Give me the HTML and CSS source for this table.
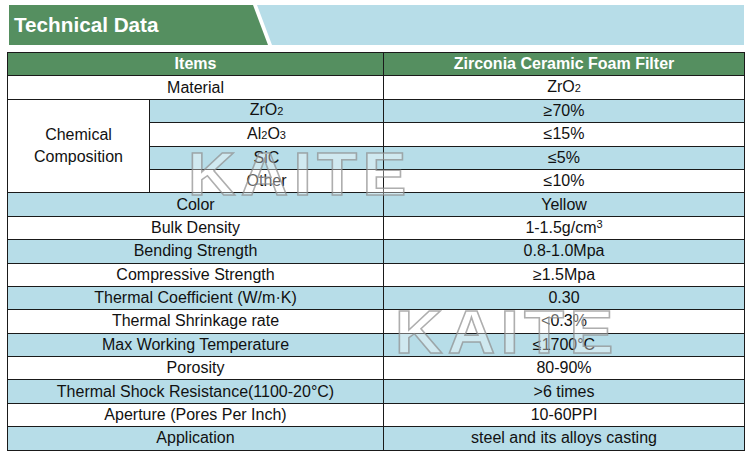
FILE: index.html
```html
<!DOCTYPE html>
<html>
<head>
<meta charset="utf-8">
<link rel="stylesheet" href="styles.css">
</head>
<body>
<div class="page">
  <div class="banner">
    <div class="banner-sep"></div>
    <div class="banner-title"><h1>Technical Data</h1></div>
  </div>
  <table class="spec">
    <colgroup>
      <col class="c1"><col class="c2"><col class="c3">
    </colgroup>
    <tr class="head"><th colspan="2">Items</th><th>Zirconia Ceramic Foam Filter</th></tr>
    <tr><td colspan="2">Material</td><td>ZrO<span class="sub">2</span></td></tr>
    <tr><td rowspan="4" class="white">Chemical<br>Composition</td><td class="blue">ZrO<span class="sub">2</span></td><td class="blue">≥70%</td></tr>
    <tr><td>Al<span class="sub">2</span>O<span class="sub">3</span></td><td>≤15%</td></tr>
    <tr><td class="blue">SiC</td><td class="blue">≤5%</td></tr>
    <tr><td>Other</td><td>≤10%</td></tr>
    <tr class="blue"><td colspan="2">Color</td><td>Yellow</td></tr>
    <tr><td colspan="2">Bulk Density</td><td>1-1.5g/cm<span class="sup">3</span></td></tr>
    <tr class="blue"><td colspan="2">Bending Strength</td><td>0.8-1.0Mpa</td></tr>
    <tr><td colspan="2">Compressive Strength</td><td>≥1.5Mpa</td></tr>
    <tr class="blue"><td colspan="2">Thermal Coefficient (W/m·K)</td><td>0.30</td></tr>
    <tr><td colspan="2">Thermal Shrinkage rate</td><td>&lt;0.3%</td></tr>
    <tr class="blue"><td colspan="2">Max Working Temperature</td><td>≤1700°C</td></tr>
    <tr><td colspan="2">Porosity</td><td>80-90%</td></tr>
    <tr class="blue"><td colspan="2">Thermal Shock Resistance(1100-20°C)</td><td>&gt;6 times</td></tr>
    <tr><td colspan="2">Aperture (Pores Per Inch)</td><td>10-60PPI</td></tr>
    <tr class="blue"><td colspan="2">Application</td><td>steel and its alloys casting</td></tr>
  </table>
  <div class="watermark wm1">KAITE</div>
  <div class="watermark wm2">KAITE</div>
</div>
</body>
</html>
```
FILE: styles.css
```css
html, body {
  margin: 0;
  padding: 0;
  background: #ffffff;
}
.page {
  position: relative;
  width: 750px;
  height: 461px;
  padding-top: 5px;
  box-sizing: border-box;
  font-family: "Liberation Sans", Arial, sans-serif;
  color: #111;
}
.banner {
  position: relative;
  margin-left: 9px;
  width: 735px;
  height: 40px;
  background: #b7dde8;
}
.banner-sep {
  position: absolute;
  left: 0;
  top: 0;
  width: 264px;
  height: 40px;
  background: #ffffff;
  clip-path: polygon(0 0, 248px 0, 263px 100%, 0 100%);
}
.banner-title {
  position: relative;
  width: 260px;
  height: 40px;
  background: #558f60;
  clip-path: polygon(0 0, 244px 0, 259px 100%, 0 100%);
  display: flex;
  align-items: center;
  padding-left: 5px;
  box-sizing: border-box;
}
.banner-title h1 {
  margin: 0;
  font-size: 20.7px;
  font-weight: bold;
  color: #ffffff;
  line-height: 1;
  padding-top: 1px;
}
.spec {
  margin-top: 7px;
  margin-left: 7px;
  width: 737px;
  border-collapse: collapse;
  table-layout: fixed;
  font-size: 16px;
}
.c1 { width: 142px; }
.c2 { width: 234px; }
.c3 { width: 361px; }
.spec tr { height: 23.4px; }
.spec th, .spec td {
  border: 1px solid #1a1a1a;
  padding: 0;
  text-align: center;
  vertical-align: middle;
  line-height: 20px;
  white-space: nowrap;
}
.spec .head th {
  background: #558f60;
  color: #ffffff;
  font-weight: bold;
}
.spec tr.blue td, .spec td.blue {
  background: #b7dde8;
}
.spec td.white {
  background: #ffffff;
  line-height: 22px;
}
.sub {
  font-size: 11px;
  vertical-align: baseline;
}
.sup {
  font-size: 11px;
  vertical-align: 5px;
  line-height: 0;
}
.watermark {
  position: absolute;
  font-family: "Liberation Sans", Arial, sans-serif;
  font-weight: bold;
  font-size: 62px;
  line-height: 1;
  color: rgba(255, 255, 255, 0.35);
  -webkit-text-stroke: 1.5px rgba(140, 140, 140, 0.7);
  letter-spacing: 5px;
  transform: scaleX(1.06);
  transform-origin: 0 0;
  pointer-events: none;
}
.wm1 {
  left: 188px;
  top: 143px;
}
.wm2 {
  left: 395px;
  top: 301px;
}
```
